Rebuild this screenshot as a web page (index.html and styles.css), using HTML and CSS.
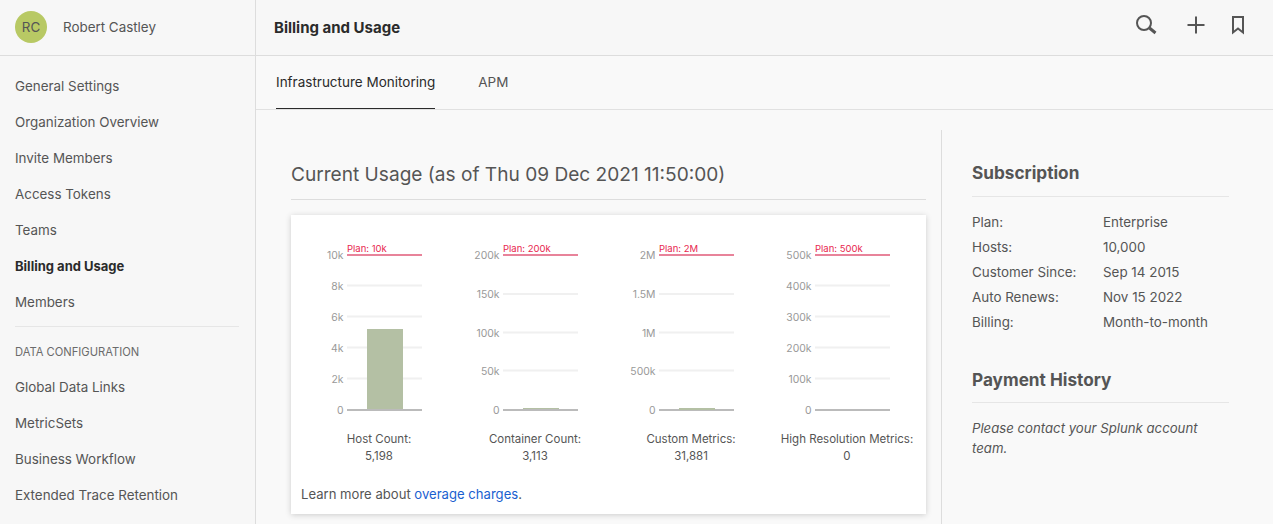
FILE: index.html
```html
<!DOCTYPE html>
<html>
<head>
    <title>Billing and Usage</title>
    <link rel="stylesheet" href="styles.css">
</head>
<body>
    <div class="app">
        <aside class="sidebar">
            <div class="user">
                <span class="avatar">RC</span>
                <span class="user-name">Robert Castley</span>
            </div>
            <nav class="nav">
                <a class="nav-item">General Settings</a>
                <a class="nav-item">Organization Overview</a>
                <a class="nav-item">Invite Members</a>
                <a class="nav-item">Access Tokens</a>
                <a class="nav-item">Teams</a>
                <a class="nav-item active">Billing and Usage</a>
                <a class="nav-item">Members</a>
                <div class="nav-divider"></div>
                <div class="nav-title">DATA CONFIGURATION</div>
                <a class="nav-item">Global Data Links</a>
                <a class="nav-item">MetricSets</a>
                <a class="nav-item">Business Workflow</a>
                <a class="nav-item">Extended Trace Retention</a>
            </nav>
        </aside>

        <main class="main">
            <header class="topbar">
                <h1 class="page-title">Billing and Usage</h1>
                <div class="actions">
                    <svg class="icon icon-search" width="24" height="24" viewBox="0 0 24 24">
                        <circle cx="10" cy="10" r="7"/>
                        <path d="M15.500 15L21.500 20" class="thick"/>
                    </svg>
                    <svg class="icon" width="24" height="24" viewBox="0 0 24 24">
                        <path d="M12 3.500V20.500M3.500 12H20.500"/>
                    </svg>
                    <svg class="icon" width="24" height="24" viewBox="0 0 24 24">
                        <path d="M7 4H17V19.500L12 15.500L7 19.500Z"/>
                    </svg>
                </div>
            </header>

            <div class="tabs">
                <a class="tab active">Infrastructure Monitoring</a>
                <a class="tab">APM</a>
            </div>

            <div class="content">
                <section class="usage">
                    <h2 class="usage-title">Current Usage (as of Thu 09 Dec 2021 11:50:00)</h2>
                    <div class="card">
                        <div class="charts">
                            <div class="chart">
                                <svg width="156" height="180" viewBox="0 0 156 180">
                                    <text class="plan" x="46" y="12">Plan: 10k</text>
                                    <line class="grid" x1="46" x2="121" y1="45.500" y2="45.500"/>
                                    <line class="grid" x1="46" x2="121" y1="76.500" y2="76.500"/>
                                    <line class="grid" x1="46" x2="121" y1="107.500" y2="107.500"/>
                                    <line class="grid" x1="46" x2="121" y1="138.500" y2="138.500"/>
                                    <rect class="bar" x="66" y="89" width="36" height="81"/>
                                    <line class="plan-line" x1="46" x2="121" y1="15" y2="15"/>
                                    <line class="base" x1="46" x2="121" y1="170" y2="170"/>
                                    <text class="tick" x="42.500" y="18.500">10k</text>
                                    <text class="tick" x="42.500" y="49.500">8k</text>
                                    <text class="tick" x="42.500" y="80.500">6k</text>
                                    <text class="tick" x="42.500" y="111.500">4k</text>
                                    <text class="tick" x="42.500" y="142.500">2k</text>
                                    <text class="tick" x="42.500" y="173.500">0</text>
                                </svg>
                                <div class="chart-label">Host Count:<br>5,198</div>
                            </div>
                            <div class="chart">
                                <svg width="156" height="180" viewBox="0 0 156 180">
                                    <text class="plan" x="46" y="12">Plan: 200k</text>
                                    <line class="grid" x1="46" x2="121" y1="54" y2="54"/>
                                    <line class="grid" x1="46" x2="121" y1="92.500" y2="92.500"/>
                                    <line class="grid" x1="46" x2="121" y1="130.500" y2="130.500"/>
                                    <rect class="bar" x="66" y="168" width="36" height="2"/>
                                    <line class="plan-line" x1="46" x2="121" y1="15" y2="15"/>
                                    <line class="base" x1="46" x2="121" y1="170" y2="170"/>
                                    <text class="tick" x="42.500" y="18.500">200k</text>
                                    <text class="tick" x="42.500" y="57.500">150k</text>
                                    <text class="tick" x="42.500" y="96.500">100k</text>
                                    <text class="tick" x="42.500" y="134.500">50k</text>
                                    <text class="tick" x="42.500" y="173.500">0</text>
                                </svg>
                                <div class="chart-label">Container Count:<br>3,113</div>
                            </div>
                            <div class="chart">
                                <svg width="156" height="180" viewBox="0 0 156 180">
                                    <text class="plan" x="46" y="12">Plan: 2M</text>
                                    <line class="grid" x1="46" x2="121" y1="54" y2="54"/>
                                    <line class="grid" x1="46" x2="121" y1="92.500" y2="92.500"/>
                                    <line class="grid" x1="46" x2="121" y1="130.500" y2="130.500"/>
                                    <line class="plan-line" x1="46" x2="121" y1="15" y2="15"/>
                                    <line class="base" x1="46" x2="121" y1="170" y2="170"/>
                                    <rect class="bar" x="66" y="168" width="36" height="2"/>
                                    <text class="tick" x="42.500" y="18.500">2M</text>
                                    <text class="tick" x="42.500" y="57.500">1.5M</text>
                                    <text class="tick" x="42.500" y="96.500">1M</text>
                                    <text class="tick" x="42.500" y="134.500">500k</text>
                                    <text class="tick" x="42.500" y="173.500">0</text>
                                </svg>
                                <div class="chart-label">Custom Metrics:<br>31,881</div>
                            </div>
                            <div class="chart">
                                <svg width="156" height="180" viewBox="0 0 156 180">
                                    <text class="plan" x="46" y="12">Plan: 500k</text>
                                    <line class="grid" x1="46" x2="121" y1="45.500" y2="45.500"/>
                                    <line class="grid" x1="46" x2="121" y1="76.500" y2="76.500"/>
                                    <line class="grid" x1="46" x2="121" y1="107.500" y2="107.500"/>
                                    <line class="grid" x1="46" x2="121" y1="138.500" y2="138.500"/>
                                    <line class="plan-line" x1="46" x2="121" y1="15" y2="15"/>
                                    <line class="base" x1="46" x2="121" y1="170" y2="170"/>
                                    <text class="tick" x="42.500" y="18.500">500k</text>
                                    <text class="tick" x="42.500" y="49.500">400k</text>
                                    <text class="tick" x="42.500" y="80.500">300k</text>
                                    <text class="tick" x="42.500" y="111.500">200k</text>
                                    <text class="tick" x="42.500" y="142.500">100k</text>
                                    <text class="tick" x="42.500" y="173.500">0</text>
                                </svg>
                                <div class="chart-label">High Resolution Metrics:<br>0</div>
                            </div>
                        </div>
                        <p class="card-note">Learn more about <a class="link">overage charges</a>.</p>
                    </div>
                </section>

                <section class="details">
                    <h3 class="details-title">Subscription</h3>
                    <div class="details-rows">
                        <span>Plan:</span><span>Enterprise</span>
                        <span>Hosts:</span><span>10,000</span>
                        <span>Customer Since:</span><span>Sep 14 2015</span>
                        <span>Auto Renews:</span><span>Nov 15 2022</span>
                        <span>Billing:</span><span>Month-to-month</span>
                    </div>
                    <h3 class="details-title history">Payment History</h3>
                    <p class="details-note">Please contact your Splunk account team.</p>
                </section>
            </div>
        </main>
    </div>
</body>
</html>
```

FILE: styles.css
```css
* {
    box-sizing: border-box;
}
html, body {
    height: 100%;
}
body {
    margin: 0;
    overflow: hidden;
    font-family: Inter, "Liberation Sans", sans-serif;
    font-size: 13.400px;
    color: #555;
    background-color: #f9f9f9;
}
.app {
    display: flex;
    height: 524px;
    overflow: hidden;
}
.sidebar {
    width: 256px;
    flex: none;
    background-color: #f7f7f7;
    border-right: 1px solid #ddd;
}
.user {
    display: flex;
    align-items: center;
    height: 56px;
    padding: 0 0 1px 15px;
    border-bottom: 1px solid #ddd;
}
.avatar {
    display: flex;
    align-items: center;
    justify-content: center;
    width: 32px;
    height: 32px;
    border-radius: 50%;
    background-color: #b8c964;
    color: #555;
}
.user-name {
    margin-left: 16px;
}
.nav {
    padding: 12px 15px 0;
}
.nav-item {
    display: block;
    height: 36px;
    line-height: 36px;
}
.nav-item.active {
    font-weight: 700;
    font-size: 13px;
    color: #2b2b2b;
}
.nav-divider {
    width: 224px;
    height: 1px;
    margin: 6px 0 0;
    background-color: #e6e6e6;
}
.nav-title {
    height: 42px;
    padding-top: 18px;
    line-height: 14px;
    font-size: 11.200px;
    color: #6b6b6b;
}
.main {
    flex: 1;
    min-width: 0;
}
.topbar {
    display: flex;
    align-items: center;
    justify-content: space-between;
    height: 56px;
    padding: 0 23px 0 18px;
    background-color: #f7f7f7;
    border-bottom: 1px solid #ddd;
}
.page-title {
    margin: 0;
    font-size: 15px;
    font-weight: 700;
    color: #2b2b2b;
}
.actions {
    display: flex;
    gap: 18px;
    align-items: center;
    padding-bottom: 5px;
}
.icon {
    fill: none;
    stroke: #555;
    stroke-width: 2;
}
.icon-search {
    margin-right: 8px;
}
.icon .thick {
    stroke-width: 3;
}
.tabs {
    display: flex;
    gap: 43px;
    height: 54px;
    padding-left: 20px;
    border-bottom: 1px solid #e1e1e1;
}
.tab {
    height: 53px;
    line-height: 52px;
    font-size: 13.500px;
}
.tab.active {
    color: #2b2b2b;
    border-bottom: 1px solid #2b2b2b;
}
.content {
    display: flex;
    margin-top: 20px;
}
.usage {
    width: 686px;
    flex: none;
    padding: 0 15px 0 35px;
    border-right: 1px solid #ddd;
    height: 400px;
}
.usage-title {
    height: 70px;
    margin: 0 0 15px;
    padding-top: 30px;
    font-size: 19.100px;
    line-height: 28px;
    font-weight: 400;
    border-bottom: 1px solid #ddd;
}
.card {
    height: 299px;
    padding: 25px 0 0 10px;
    background-color: #fff;
    box-shadow: 0 1px 6px rgba(0, 0, 0, 0.18);
}
.charts {
    display: flex;
}
.chart {
    width: 156px;
    flex: none;
}
.chart svg {
    display: block;
}
.plan {
    font-size: 9.500px;
    fill: #e8274f;
}
.tick {
    font-size: 10.400px;
    fill: #999;
    text-anchor: end;
}
.grid {
    stroke: #f0f0f0;
    stroke-width: 2;
}
.plan-line {
    stroke: #e8839a;
    stroke-width: 2;
}
.base {
    stroke: #bbb;
    stroke-width: 2;
}
.bar {
    fill: #b4c0a4;
}
.chart-label {
    margin-top: 11px;
    font-size: 11.500px;
    line-height: 17px;
    text-align: center;
    white-space: nowrap;
}
.card-note {
    margin: 19px 0 0;
    font-size: 13.100px;
    line-height: 20px;
}
.link {
    color: #1a5fd0;
}
.details {
    width: 287px;
    padding-left: 30px;
}
.details-title {
    height: 67px;
    margin: 0 0 13px;
    padding-top: 30px;
    line-height: 26px;
    font-size: 17.200px;
    font-weight: 700;
    border-bottom: 1px solid #e6e6e6;
}
.details-rows {
    display: grid;
    grid-template-columns: 131px 1fr;
    grid-auto-rows: 25px;
    line-height: 25px;
}
.history {
    height: 35px;
    margin-top: 33px;
    margin-bottom: 15px;
    padding-top: 0;
    line-height: 24px;
}
.details-note {
    margin: 0;
    font-size: 13.200px;
    font-style: italic;
    line-height: 20px;
}
```
